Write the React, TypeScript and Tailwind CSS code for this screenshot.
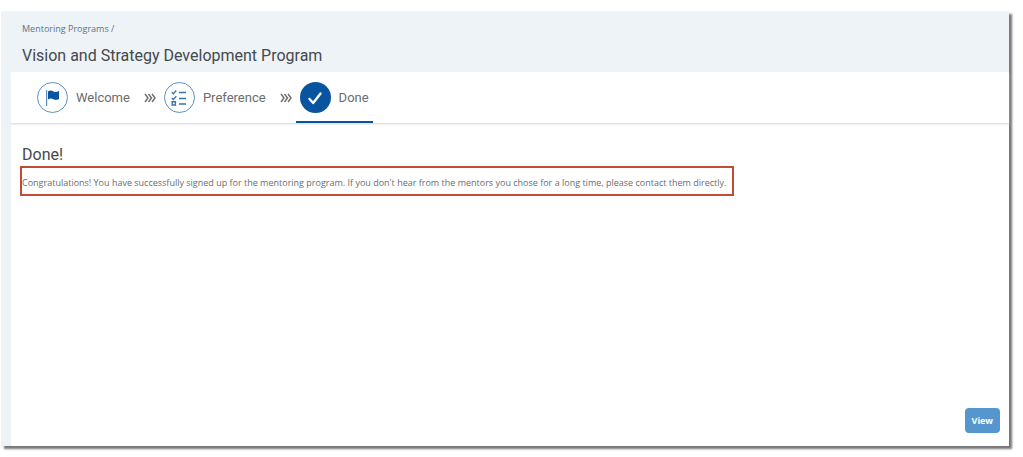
import type { ReactNode } from "react";

const FlagIcon = () => (
  <svg viewBox="0 0 16 16" className="size-4" aria-hidden="true">
    <path fill="#5b8fc0" d="M1 0h1.200v16H1z" />
    <path
      fill="#0854a0"
      d="M3 1.400c2-1.200 3.600-.9 5.400 0 1.800.9 3.400.8 5.600-.3v7.800c-2 1.200-3.800 1.200-5.600.3C6.600 8.300 5 8.200 3 9.400z"
    />
  </svg>
);

const ListIcon = () => (
  <svg
    viewBox="0 0 16 16"
    className="size-4"
    fill="none"
    stroke="#3873b0"
    strokeWidth="1.400"
    aria-hidden="true"
  >
    <path d="M.8 2.200l1.500 1.500L5.300.500M.8 8l1.500 1.500 3-3.200" />
    <path d="M1.200 11.800h3.200v3.200H1.200z" />
    <path d="M8 2.500h7M8 8.500h7M8 14h7" />
  </svg>
);

const CheckIcon = () => (
  <svg
    viewBox="0 0 16 16"
    className="size-4"
    fill="none"
    stroke="#ffffff"
    strokeWidth="2.400"
    strokeLinecap="round"
    strokeLinejoin="round"
    aria-hidden="true"
  >
    <path d="M2.500 9l3.700 4L13.500 3.500" />
  </svg>
);

const Separator = () => (
  <svg
    viewBox="0 0 12 10"
    className="mr-1 ml-2.5 h-2.5 w-3 shrink-0"
    fill="none"
    stroke="#6a6d70"
    strokeWidth="1.400"
    aria-hidden="true"
  >
    <path d="M1 1l3 4-3 4M4.500 1l3 4-3 4M8 1l3 4-3 4" />
  </svg>
);

type StepProps = {
  label: string;
  icon: ReactNode;
  active?: boolean;
};

const Step = ({ label, icon, active = false }: StepProps) => (
  <button
    type="button"
    aria-current={active ? "step" : undefined}
    className={
      active
        ? "flex items-center gap-2 border-b-2 border-[#0854a0] px-1 pt-0.5 text-[#6a6d70]"
        : "flex items-center gap-2 border-b-2 border-transparent px-1 pt-0.5 text-[#6a6d70]"
    }
  >
    <span
      className={
        active
          ? "flex size-[31px] items-center justify-center rounded-full bg-[#0854a0]"
          : "flex size-[31px] items-center justify-center rounded-full border border-[#5b91c8] bg-white"
      }
    >
      {icon}
    </span>
    <span className="text-[13px]">{label}</span>
  </button>
);

export default function App() {
  return (
    <div className="flex min-h-screen bg-white pt-[11px] pr-[14px] pb-[11px] pl-px font-['Roboto',sans-serif]">
      <div className="flex grow flex-col bg-[#edf3f7] shadow-[3px_3px_2px_#777777]">
        {/* Page header */}
        <header className="px-[21px] pt-2.5 pb-1">
          <nav aria-label="Breadcrumb" className="font-['Open_Sans',sans-serif] text-[9px] leading-4 text-[#5b738b]">
            <a href="#programs">Mentoring Programs</a> /
          </nav>
          <h1 className="mt-[7px] text-base leading-6 text-[#45494d]">
            Vision and Strategy Development Program
          </h1>
        </header>

        <div className="ml-2.5 flex grow flex-col bg-white">
          {/* Steps */}
          <div className="flex h-[52px] border-b border-[#e2e2e2] pl-[22px] shadow-[0_1px_1px_#f0f0f0]">
            <Step label="Welcome" icon={<FlagIcon />} />
            <div className="flex items-center">
              <Separator />
            </div>
            <Step label="Preference" icon={<ListIcon />} />
            <div className="flex items-center">
              <Separator />
            </div>
            <Step label="Done" icon={<CheckIcon />} active />
          </div>

          <main className="flex grow flex-col px-[9px] pt-5">
            <h2 className="px-0.5 text-base leading-[22px] text-[#45494d]">Done!</h2>
            <p className="w-fit border-2 border-[#c54a34] pt-2 pr-1.5 pb-1 font-['Open_Sans',sans-serif] text-[9px] leading-[14px] text-[#6a6d70]">
              Congratulations! You have successfully signed up for the mentoring program. If you don't
              hear from the mentors you chose for a long time, please contact them directly.
            </p>
            <div className="mt-auto flex justify-end pb-[13px]">
              <button
                type="button"
                className="h-[25px] rounded-sm bg-[#5496cd] px-[7px] font-['Noto_Sans',sans-serif] text-[9px] font-bold text-white"
              >
                View
              </button>
            </div>
          </main>
        </div>
      </div>
    </div>
  );
}
